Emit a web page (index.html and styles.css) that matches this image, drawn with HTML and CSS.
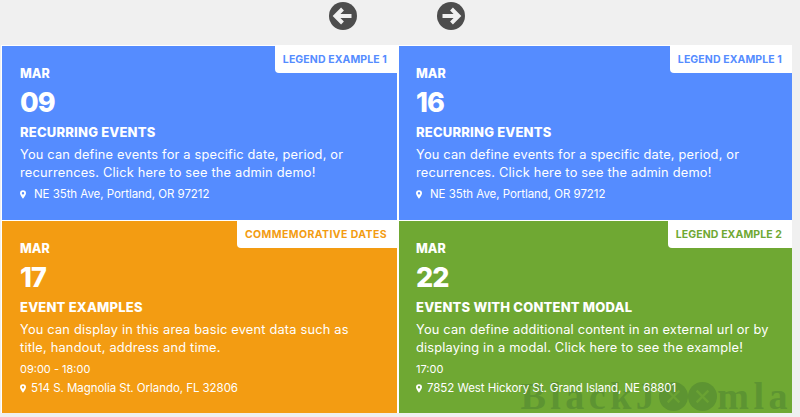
FILE: index.html
```html
<!DOCTYPE html>
<html lang="en">
<head>
<meta charset="utf-8">
<title>Events</title>
<link rel="stylesheet" href="styles.css">
</head>
<body>
<nav class="nav">
  <svg class="arrow" viewBox="0 0 28 28"><circle cx="14" cy="14" r="14" fill="#4d4d4d"/><path d="M13.500 7 6.500 14l7 7M7.500 14H22.500" fill="none" stroke="#f0f0f0" stroke-width="4"/></svg>
  <svg class="arrow" viewBox="0 0 28 28"><circle cx="14" cy="14" r="14" fill="#4d4d4d"/><path d="M14.500 7 21.500 14l-7 7M20.500 14H5.500" fill="none" stroke="#f0f0f0" stroke-width="4"/></svg>
</nav>
<main class="grid">
  <article class="card blue">
    <span class="tag">LEGEND EXAMPLE 1</span>
    <div class="month">MAR</div>
    <div class="day">09</div>
    <h3 class="title">RECURRING EVENTS</h3>
    <p class="desc">You can define events for a specific date, period, or<br>recurrences. Click here to see the admin demo!</p>
    <div class="loc wide"><svg class="pin" viewBox="0 0 10 14"><path fill-rule="evenodd" d="M5 0a5 5 0 0 1 5 5c0 2.500-3 6.500-5 9-2-2.500-5-6.500-5-9a5 5 0 0 1 5-5Zm0 3a2 2 0 1 0 0 4 2 2 0 0 0 0-4Z" fill="#fff"/></svg>NE 35th Ave, Portland, OR 97212</div>
  </article>
  <article class="card blue">
    <span class="tag">LEGEND EXAMPLE 1</span>
    <div class="month">MAR</div>
    <div class="day">16</div>
    <h3 class="title">RECURRING EVENTS</h3>
    <p class="desc">You can define events for a specific date, period, or<br>recurrences. Click here to see the admin demo!</p>
    <div class="loc wide"><svg class="pin" viewBox="0 0 10 14"><path fill-rule="evenodd" d="M5 0a5 5 0 0 1 5 5c0 2.500-3 6.500-5 9-2-2.500-5-6.500-5-9a5 5 0 0 1 5-5Zm0 3a2 2 0 1 0 0 4 2 2 0 0 0 0-4Z" fill="#fff"/></svg>NE 35th Ave, Portland, OR 97212</div>
  </article>
  <article class="card orange">
    <span class="tag">COMMEMORATIVE DATES</span>
    <div class="month">MAR</div>
    <div class="day">17</div>
    <h3 class="title">EVENT EXAMPLES</h3>
    <p class="desc">You can display in this area basic event data such as<br>title, handout, address and time.</p>
    <div class="time">09:00 - 18:00</div>
    <div class="loc"><svg class="pin" viewBox="0 0 10 14"><path fill-rule="evenodd" d="M5 0a5 5 0 0 1 5 5c0 2.500-3 6.500-5 9-2-2.500-5-6.500-5-9a5 5 0 0 1 5-5Zm0 3a2 2 0 1 0 0 4 2 2 0 0 0 0-4Z" fill="#fff"/></svg>514 S. Magnolia St. Orlando, FL 32806</div>
  </article>
  <article class="card green">
    <div class="mark">BlackJ<svg class="mark-o" viewBox="0 0 30 30"><circle cx="15" cy="15" r="15"/><path d="M9 9l12 12M21 9 9 21" stroke="#6aa233" stroke-width="2.500"/></svg><svg class="mark-o" viewBox="0 0 30 30"><circle cx="15" cy="15" r="15"/><path d="M9 9l12 12M21 9 9 21" stroke="#6aa233" stroke-width="2.500"/></svg>mla</div>
    <span class="tag">LEGEND EXAMPLE 2</span>
    <div class="month">MAR</div>
    <div class="day">22</div>
    <h3 class="title">EVENTS WITH CONTENT MODAL</h3>
    <p class="desc">You can define additional content in an external url or by<br>displaying in a modal. Click here to see the example!</p>
    <div class="time">17:00</div>
    <div class="loc"><svg class="pin" viewBox="0 0 10 14"><path fill-rule="evenodd" d="M5 0a5 5 0 0 1 5 5c0 2.500-3 6.500-5 9-2-2.500-5-6.500-5-9a5 5 0 0 1 5-5Zm0 3a2 2 0 1 0 0 4 2 2 0 0 0 0-4Z" fill="#fff"/></svg>7852 West Hickory St. Grand Island, NE 68801</div>
  </article>
</main>
</body>
</html>
```
FILE: styles.css
```css
* { box-sizing: border-box; }
html, body { margin: 0; padding: 0; }
body {
  background: #f0f0f0;
  font-family: Inter, "Noto Sans", sans-serif;
  color: #fff;
  overflow: hidden;
}
.nav {
  height: 45px;
  display: flex;
  justify-content: center;
  gap: 80px;
  padding: 2px 6px 0 0;
}
.arrow { width: 28px; height: 28px; display: block; }
.grid {
  margin-left: 1px;
  width: 791px;
  display: grid;
  grid-template-columns: 395px 393px;
  grid-template-rows: 175px 192px;
  column-gap: 2px;
  background: #fff;
  padding: 1px 0 0 1px;
}
.card {
  position: relative;
  padding: 21px 18px 0;
}
.card:nth-child(even) { padding-left: 17px; }
.card:nth-child(-n+2) { margin-bottom: 1px; }
.blue { background: #558cff; }
.orange { background: #f39c12; }
.green { background: #6fa833; }
.tag {
  position: absolute;
  top: 0;
  right: 0;
  height: 27px;
  padding: 0 10px 0 8px;
  display: flex;
  align-items: center;
  background: #fff;
  border-bottom-left-radius: 4px;
  font-size: 10.500px;
  font-weight: 700;
  letter-spacing: 0.100px;
}
.blue .tag { color: #558cff; }
.orange .tag { color: #f39c12; letter-spacing: 0.400px; }
.green .tag { color: #6fa833; }
.month { font-size: 12.500px; font-weight: 800; line-height: 14px; }
.day { font-size: 27px; font-weight: 800; line-height: 32px; margin-top: 6px; letter-spacing: -1px; }
.title { margin: 5px 0 0; font-size: 13px; font-weight: 800; line-height: 16px; letter-spacing: 0.2px; }
.desc { margin: 6px 0 0; font-size: 12.800px; line-height: 18px; letter-spacing: 0.2px; }
.orange .desc { line-height: 17.500px; }
.green .desc { line-height: 17.500px; }
.time { margin-top: 5px; font-size: 11px; line-height: 16px; }
.loc { margin-top: 3px; font-size: 11.500px; line-height: 16px; display: flex; align-items: center; gap: 5px; letter-spacing: -0.050px; position: relative; }
.loc.wide { margin-top: 4px; gap: 8px; }
.pin { width: 6px; height: 9px; flex: none; }
.mark {
  position: absolute;
  right: 0;
  bottom: 1px;
  height: 32px;
  display: flex;
  align-items: center;
  font-family: "Liberation Serif", serif;
  font-weight: 700;
  font-size: 38px;
  letter-spacing: 4.500px;
  color: #5d9432;
  line-height: 32px;
}
.mark-o { width: 29px; height: 29px; fill: #5d9432; }
```
